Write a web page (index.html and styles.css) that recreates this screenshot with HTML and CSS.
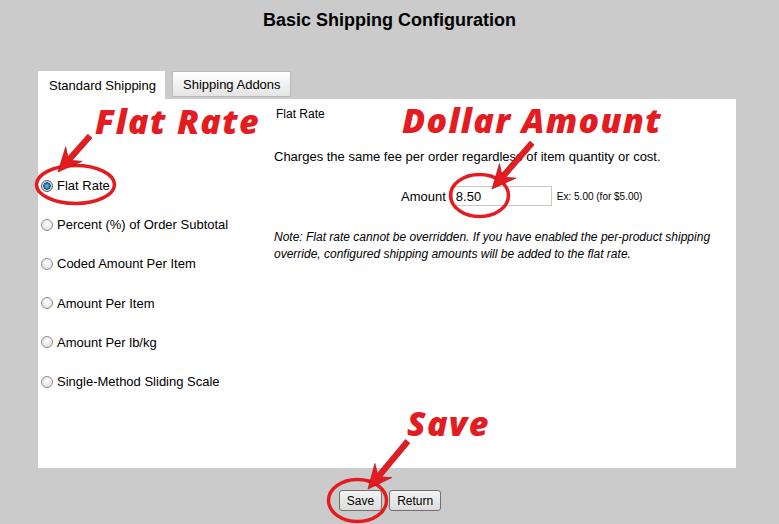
FILE: index.html
```html
<!DOCTYPE html>
<html lang="en">
<head>
  <meta charset="UTF-8">
  <title>Basic Shipping Configuration</title>
  <link rel="stylesheet" href="styles.css">
</head>
<body>
  <h1>Basic Shipping Configuration</h1>

  <div class="tabs">
    <div class="tab active">Standard Shipping</div>
    <div class="tab">Shipping Addons</div>
  </div>

  <div class="panel">
    <div class="methods">
      <label class="method"><input type="radio" name="method" checked> Flat Rate</label>
      <label class="method"><input type="radio" name="method"> Percent (%) of Order Subtotal</label>
      <label class="method"><input type="radio" name="method"> Coded Amount Per Item</label>
      <label class="method"><input type="radio" name="method"> Amount Per Item</label>
      <label class="method"><input type="radio" name="method"> Amount Per lb/kg</label>
      <label class="method"><input type="radio" name="method"> Single-Method Sliding Scale</label>
    </div>

    <div class="details">
      <div class="details-title">Flat Rate</div>
      <div class="details-desc">Charges the same fee per order regardless of item quantity or cost.</div>
      <div class="amount-row">
        <label class="amount-label">Amount</label>
        <input type="text" class="amount-input" value="8.50">
        <span class="amount-hint">Ex: 5.00 (for $5.00)</span>
      </div>
      <div class="note">Note: Flat rate cannot be overridden. If you have enabled the per-product shipping override, configured shipping amounts will be added to the flat rate.</div>
    </div>
  </div>

  <div class="actions">
    <button type="button" class="btn">Save</button>
    <button type="button" class="btn">Return</button>
  </div>

  <!-- callouts drawn over the screen -->
  <svg class="callouts" width="779" height="524" viewBox="0 0 779 524">
    <g class="callout-text">
      <text x="95" y="134">Flat Rate</text>
      <text x="402" y="133">Dollar Amount</text>
      <text x="407" y="436">Save</text>
    </g>
    <g class="callout-ring">
      <ellipse cx="75.5" cy="184.5" rx="39" ry="19"/>
      <ellipse cx="479.5" cy="195.5" rx="29" ry="21"/>
      <ellipse cx="357.5" cy="500.5" rx="29" ry="21"/>
    </g>
    <g class="callout-arrow">
      <path d="M0 0 L-24 -11 L-18 -2.8 L-48 -2.8 L-48 2.8 L-18 2.8 L-24 11 Z" transform="translate(58 172) rotate(131.6)"/>
      <path d="M0 0 L-24 -11 L-18 -2.8 L-61 -2.8 L-61 2.8 L-18 2.8 L-24 11 Z" transform="translate(492 189) rotate(131)"/>
      <path d="M0 0 L-24 -11 L-18 -2.8 L-62 -2.8 L-62 2.8 L-18 2.8 L-24 11 Z" transform="translate(368 489) rotate(129.8)"/>
    </g>
  </svg>
</body>
</html>
```

FILE: styles.css
```css
body {
  margin: 0;
  background: #cbcbcb;
  font-family: "Liberation Sans", Arial, sans-serif;
  color: #000;
  position: relative;
  width: 779px;
  height: 524px;
  overflow: hidden;
}

h1 {
  margin: 0;
  padding-top: 10px;
  font-size: 18px;
  line-height: 21px;
  text-align: center;
}

.tabs {
  display: flex;
  align-items: flex-start;
  gap: 7px;
  margin-top: 40px;
  padding-left: 38px;
}

.tab {
  box-sizing: border-box;
  height: 26px;
  width: 119px;
  padding-left: 10px;
  font-size: 13px;
  line-height: 25px;
  border: 1px solid #b9b9b9;
  background: linear-gradient(#ffffff, #e4e4e4);
}

.tab.active {
  width: 127px;
  height: 28px;
  padding-left: 11px;
  line-height: 29px;
  border: none;
  background: #fff;
}

.panel {
  display: flex;
  margin-left: 38px;
  width: 698px;
  height: 369px;
  background: #fff;
}

.methods {
  width: 236px;
  padding-top: 67px;
  padding-left: 3px;
  box-sizing: border-box;
}

.method {
  display: flex;
  align-items: center;
  height: 39.2px;
  font-size: 13px;
}

.method input {
  appearance: none;
  -webkit-appearance: none;
  width: 12px;
  height: 12px;
  margin: 0 4px 0 0;
  border-radius: 50%;
  border: 1px solid #8f8f8f;
  background: radial-gradient(circle at 50% 40%, #ffffff, #d6d6d6);
  box-sizing: border-box;
}

.method input:checked {
  border-color: #5c5c5c;
  background: radial-gradient(circle, #5fc3ee 0, #1d7fb8 2.5px, #2a4a6a 3.5px, #e8e8e8 4px, #c8c8c8 6px);
}

.details {
  flex: 1;
  padding-top: 7px;
}

.details-title {
  padding-left: 2px;
  font-size: 12px;
  line-height: 16px;
}

.details-desc {
  margin-top: 27px;
  font-size: 13px;
  line-height: 16px;
}

.amount-row {
  display: flex;
  align-items: center;
  margin-top: 21px;
  padding-left: 127px;
  height: 20px;
}

.amount-label {
  font-size: 13px;
  margin-right: 6px;
}

.amount-input {
  box-sizing: border-box;
  width: 100px;
  height: 20px;
  padding: 0 3px;
  border: 1px solid #c9c9c9;
  font-family: "Liberation Sans", Arial, sans-serif;
  font-size: 13px;
}

.amount-hint {
  margin-left: 5px;
  font-size: 10px;
}

.note {
  margin-top: 23px;
  width: 456px;
  font-size: 12px;
  line-height: 17px;
  font-style: italic;
}

.actions {
  display: flex;
  justify-content: center;
  gap: 7px;
  margin-top: 22px;
  padding-left: 1px;
}

.btn {
  height: 21px;
  padding: 0 7px;
  font-family: "Liberation Sans", Arial, sans-serif;
  font-size: 12px;
  color: #000;
  border: 1px solid #707070;
  border-radius: 3px;
  background: linear-gradient(#f4f4f4, #dcdcdc);
}

.callouts {
  position: absolute;
  left: 0;
  top: 0;
  pointer-events: none;
}

.callout-text text {
  font-family: "Open Sans", sans-serif;
  font-weight: 800;
  font-style: italic;
  font-size: 34px;
  letter-spacing: 1.3px;
  fill: #e41b1f;
}

.callout-ring ellipse {
  fill: none;
  stroke: #e41b1f;
  stroke-width: 3.5;
}

.callout-arrow path {
  fill: #e41b1f;
  stroke: #a31416;
  stroke-width: 0.6;
}
```
